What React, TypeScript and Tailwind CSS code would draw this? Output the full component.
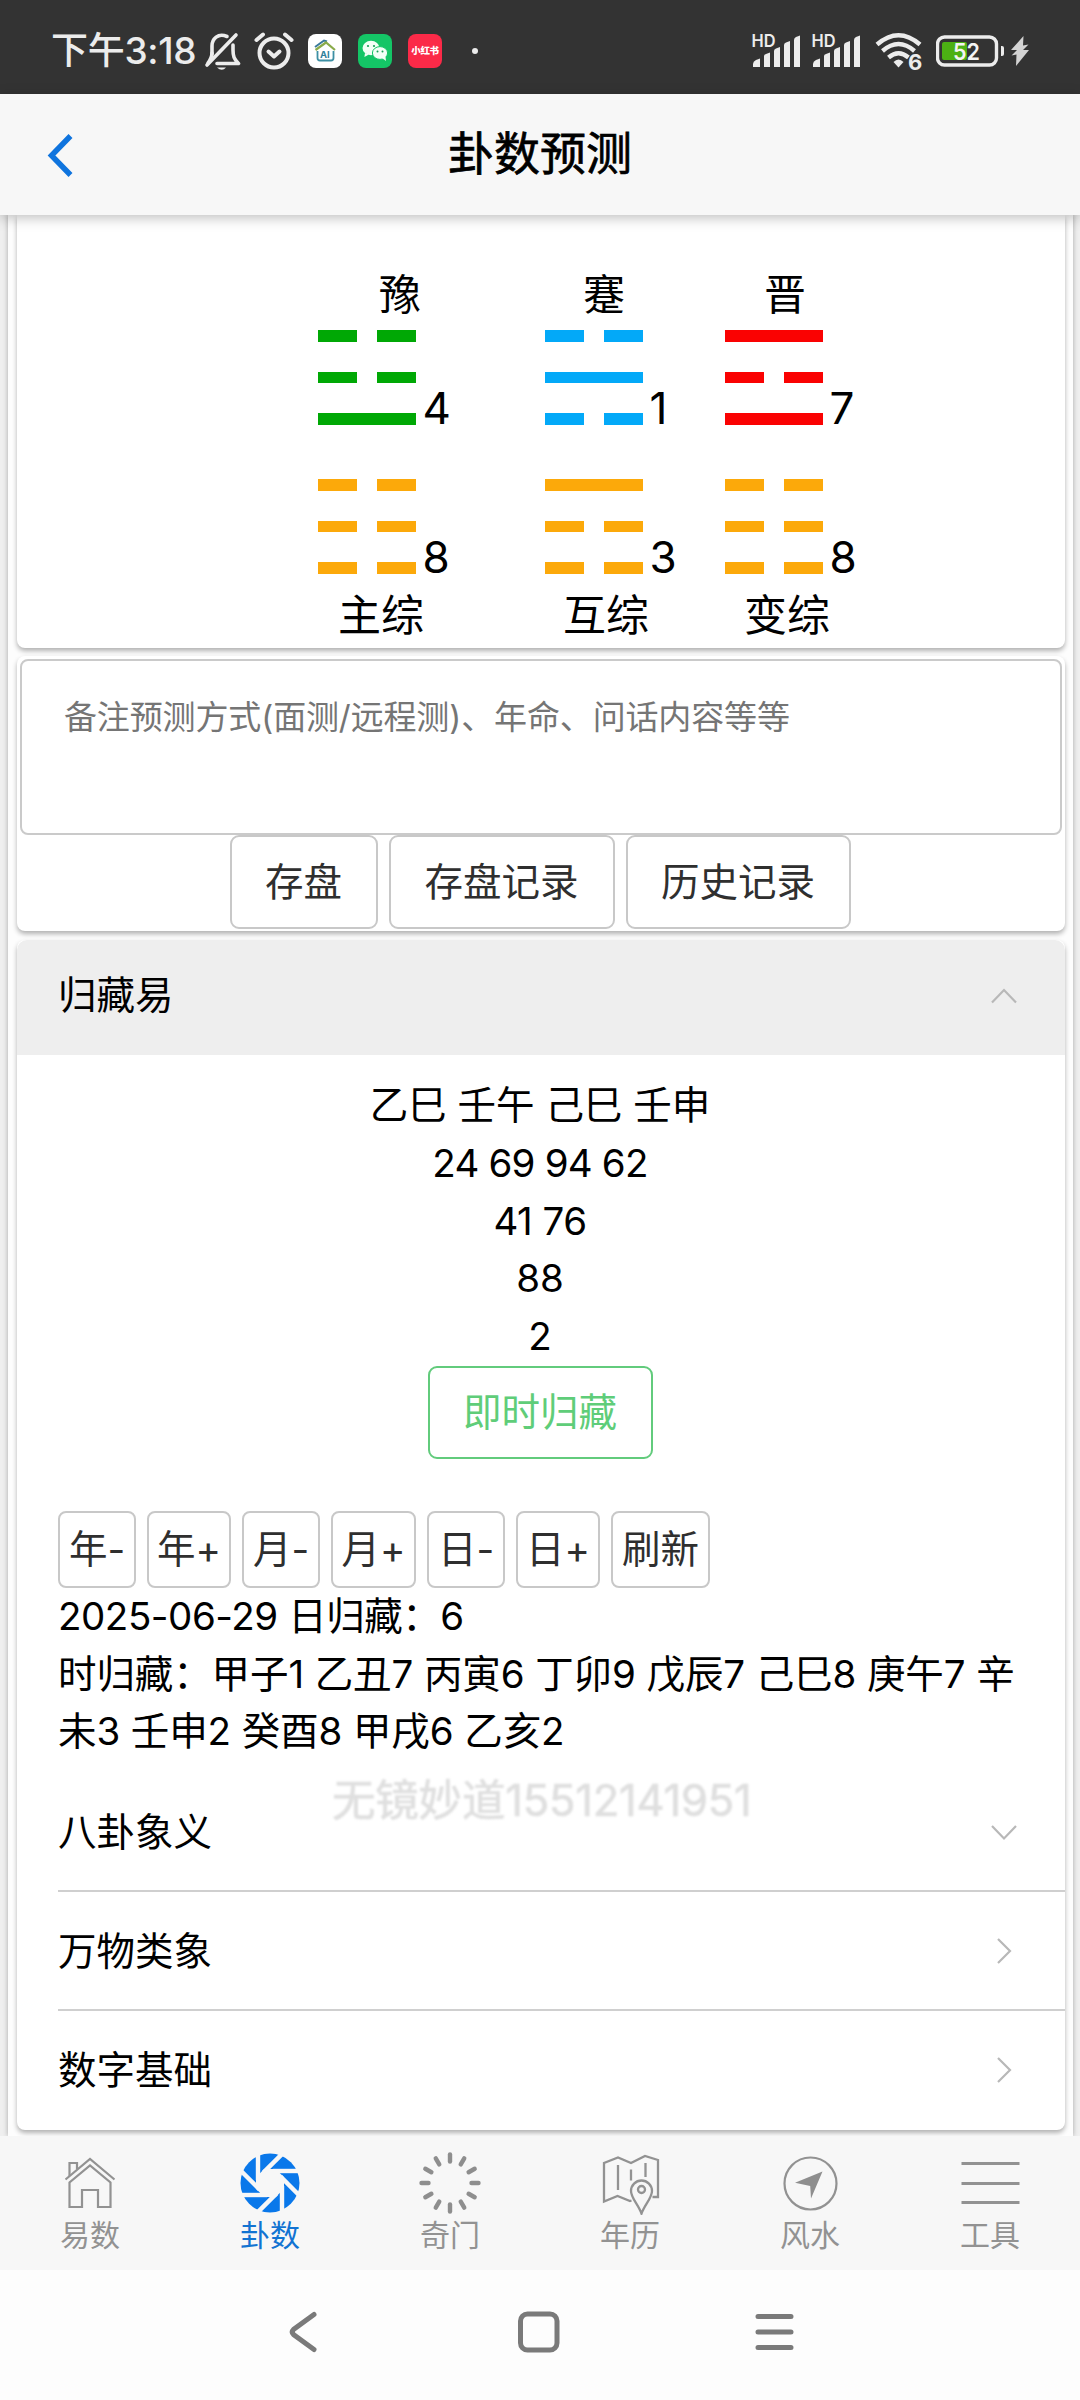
import { useState } from 'react';
import clsx from 'clsx';

type Hexagram = {
  title: string;
  label: string;
  className: string;
  titleClass: string;
  labelClass: string;
  upper: { color: string; lines: number[]; num: number };
  lower: { color: string; lines: number[]; num: number };
};

// 1 = solid line, 0 = broken line, from top to bottom
const hexagrams: Hexagram[] = [
  {
    title: '豫',
    label: '主综',
    className: 'w-[227px]',
    titleClass: 'pl-[61px]',
    labelClass: 'pl-[20px]',
    upper: { color: 'bg-[#00a805]', lines: [0, 0, 1], num: 4 },
    lower: { color: 'bg-[#fca90a]', lines: [0, 0, 0], num: 8 },
  },
  {
    title: '蹇',
    label: '互综',
    className: 'w-[180px]',
    titleClass: 'pl-[38px]',
    labelClass: 'pl-[18px]',
    upper: { color: 'bg-[#03a9f8]', lines: [0, 1, 0], num: 1 },
    lower: { color: 'bg-[#fca90a]', lines: [1, 0, 0], num: 3 },
  },
  {
    title: '晋',
    label: '变综',
    className: 'w-[180px]',
    titleClass: 'pl-[39px]',
    labelClass: 'pl-[19px]',
    upper: { color: 'bg-[#fa0202]', lines: [1, 0, 1], num: 7 },
    lower: { color: 'bg-[#fca90a]', lines: [0, 0, 0], num: 8 },
  },
];

const dateButtons = [
  { text: '年', sign: '–', width: 'w-[78px]' },
  { text: '年', sign: '+', width: 'w-[84px]' },
  { text: '月', sign: '–', width: 'w-[78px]' },
  { text: '月', sign: '+', width: 'w-[85px]' },
  { text: '日', sign: '–', width: 'w-[78px]' },
  { text: '日', sign: '+', width: 'w-[84px]' },
  { text: '刷新', sign: '', width: 'w-[99px]' },
];

const card = 'bg-white shadow-[0_3px_5px_rgba(0,0,0,0.3)]';

function Signal() {
  return (
    <svg className="w-[51px] h-[48px] shrink-0" viewBox="-1 -7 51 48" fill="#ececec">
      <text x="-0.5" y="13" fontSize="17" fontWeight="600" fontFamily="Inter" textLength="24" lengthAdjust="spacingAndGlyphs">
        HD
      </text>
      <path d="M1 33v-3q0-2.500 3-4l4-1.500V33z" />
      <path d="M12 33V22q0-1.500 2-2l4-1.500V33z" />
      <path d="M22 33V17q0-2 2-2.500l4-1.500V33z" />
      <path d="M32 33V11q0-2 2-2.500l4-1.500V33z" />
      <path d="M42 33V6q0-2 2-3l4-1.500V33z" />
    </svg>
  );
}

function StatusBar() {
  return (
    <div className="flex items-center h-[94px] pt-[8px] bg-[#333333] text-[#ececec]">
      <span className="ml-[51px] w-[152px] text-[37px] leading-[40px] font-medium whitespace-nowrap tracking-[-0.3px]">下午3:18</span>
      <svg className="w-[38px] h-[40px] shrink-0" viewBox="0 0 38 40" fill="none" stroke="#ececec" strokeWidth="3.600" strokeLinecap="round">
        <path d="M24 5.500C15 1.500 9 8 9 15v8" />
        <path d="M9 22c0 4-1 6-4 10" />
        <path d="M30 14v5c0 6 1 9 5.500 13.500H14" strokeLinejoin="round" />
        <path d="M4 34L33 4" />
        <path d="M14 36.500q5 4.500 9 0z" fill="#ececec" stroke="none" />
      </svg>
      <svg className="ml-[13px] w-[40px] h-[40px] shrink-0" viewBox="0 0 40 40" fill="none" stroke="#ececec" strokeWidth="4" strokeLinecap="round">
        <circle cx="20" cy="22" r="14.500" />
        <path d="M14.500 20.500l5.500 5 5.500-5" strokeLinejoin="round" />
        <path d="M2.500 9L9 3.500M37.500 9L31 3.500" />
      </svg>
      <svg className="ml-[14px] w-[34px] h-[34px] shrink-0" viewBox="0 0 34 34">
        <rect width="34" height="34" rx="8" fill="#fff" />
        <path d="M7 13L16 6.500l3 1" fill="none" stroke="#3a7a9c" strokeWidth="2" />
        <path d="M7.500 16L18 8.500 27 16" fill="none" stroke="#8aab4a" strokeWidth="2.200" />
        <path d="M9.500 17v7q0 2.500 2.500 2.500h11q2.500 0 2.500-2.500v-7" fill="none" stroke="#3d8fa3" strokeWidth="1.800" />
        <text x="12" y="24" fontSize="9.500" fontWeight="700" fontFamily="Inter" fill="#2e7f9b">
          AI
        </text>
      </svg>
      <svg className="ml-[16px] w-[34px] h-[34px] shrink-0" viewBox="0 0 34 34">
        <rect width="34" height="34" rx="8" fill="#14c566" />
        <ellipse cx="13" cy="14" rx="8.500" ry="7.200" fill="#f2fff6" />
        <path d="M7 19l-.6 4 4.500-2.500z" fill="#f2fff6" />
        <ellipse cx="22" cy="19" rx="7.600" ry="6.400" fill="#f2fff6" stroke="#14c566" strokeWidth="1" />
        <path d="M24 24l4 3-.6-4.500z" fill="#f2fff6" />
        <g fill="#14a055">
          <circle cx="10" cy="12" r="1.100" />
          <circle cx="16" cy="12" r="1.100" />
          <circle cx="19.500" cy="17.500" r="1" />
          <circle cx="24.500" cy="17.500" r="1" />
        </g>
      </svg>
      <div className="ml-[16px] flex items-center justify-center w-[34px] h-[34px] shrink-0 rounded-[8px] bg-[#fb2a48] text-white text-[9.5px] font-black tracking-[-0.3px] whitespace-nowrap">
        小红书
      </div>
      <div className="ml-[30px] w-[6px] h-[6px] shrink-0 rounded-full bg-[#ececec]" />
      <div className="ml-auto flex items-center">
        <Signal />
        <div className="w-[9px]" />
        <Signal />
        <svg className="ml-[13px] w-[50px] h-[56px] shrink-0" viewBox="0 -8 50 56" fill="none" stroke="#ececec" strokeWidth="4.400">
          <path d="M2 13.500Q23.500-5 45 13.500" />
          <path d="M7.500 20Q23.500 6 39.500 20" />
          <path d="M13.500 26.500Q23.500 18 33.500 26.500" />
          <path d="M18.500 31l5 5.500 5-5.500q-5-5-10 0z" fill="#ececec" stroke="none" />
          <text x="33" y="39" fontSize="22" fontWeight="700" fontFamily="Inter" fill="#ececec" stroke="#333333" strokeWidth="2" paintOrder="stroke">
            6
          </text>
        </svg>
        <svg className="ml-[11px] w-[70px] h-[32px] shrink-0" viewBox="1 0 70 32">
          <rect x="2.500" y="2" width="59" height="28" rx="7" fill="none" stroke="#ececec" strokeWidth="3.400" />
          <rect x="7" y="7" width="25" height="18" rx="2" fill="#4cb014" />
          <path d="M66 11h1q2 0 2 2v6q0 2-2 2H66z" fill="#ececec" />
          <text x="18" y="24.500" fontSize="23" fontWeight="600" fontFamily="Inter" fill="#f4f4f4" textLength="27" lengthAdjust="spacingAndGlyphs">
            52
          </text>
        </svg>
        <svg className="ml-[4px] mr-[50px] w-[20px] h-[32px] shrink-0" viewBox="0 0 20 32" fill="#d4d4d4">
          <path d="M13.500 1L1 15h6L1.500 20.500l5-1L6 31l13-16h-6l5.500-5.500-5.500 1z" />
        </svg>
      </div>
    </div>
  );
}

function NavHeader({ title }: { title: string }) {
  return (
    <div className="relative z-10 grid grid-cols-3 items-center h-[121px] px-[47px] bg-[#f7f7f7] shadow-[0_3px_12px_rgba(0,0,0,0.25)]">
      <svg className="w-[26px] h-[44px]" viewBox="0 0 26 44" fill="none" stroke="#0f74de" strokeWidth="5.500">
        <path d="M23.500 3L4.500 22.500l19 19.500" />
      </svg>
      <h1 className="pb-[3px] text-center text-[46px] leading-[56px] text-black [-webkit-text-stroke:0.7px_black]">{title}</h1>
    </div>
  );
}

function Trigram({ color, lines, num }: { color: string; lines: number[]; num: number }) {
  return (
    <div className="flex items-end">
      <div className="flex flex-col gap-[30px] w-[97.5px]">
        {lines.map((line, i) => (
          <div key={i} className="flex justify-between h-[11.5px]">
            {line ? (
              <div className={clsx('w-full', color)} />
            ) : (
              <>
                <div className={clsx('w-[38.5px]', color)} />
                <div className={clsx('w-[38.5px]', color)} />
              </>
            )}
          </div>
        ))}
      </div>
      <span className="pl-[7px] h-[33px] text-[44px] leading-[33px] tracking-[-1px]">{num}</span>
    </div>
  );
}

function HexagramColumn({ item }: { item: Hexagram }) {
  return (
    <div className={item.className}>
      <div className={clsx('h-[62px] text-[42px] leading-[53px]', item.titleClass)}>{item.title}</div>
      <Trigram {...item.upper} />
      <div className="h-[54.5px]" />
      <Trigram {...item.lower} />
      <div className={clsx('pt-[13px] text-[43px] leading-[56px] whitespace-nowrap', item.labelClass)}>{item.label}</div>
    </div>
  );
}

function Chevron({ dir }: { dir: 'up' | 'down' | 'right' }) {
  return (
    <svg className="w-[28px] h-[28px]" viewBox="0 0 28 28" fill="none" stroke="#b8b8b8" strokeWidth="2.200">
      {dir === 'up' && <path d="M2 21.500L14 9 26 21.500" />}
      {dir === 'down' && <path d="M2 8L14 20.500 26 8" />}
      {dir === 'right' && <path d="M8 2L20 14 8 26" />}
    </svg>
  );
}

function ListRow({ text, dir, last }: { text: string; dir: 'down' | 'right'; last?: boolean }) {
  return (
    <div
      className={clsx(
        'flex items-center justify-between h-[119px] ml-[41px] pr-[47px] text-[38.5px] leading-[56px]',
        last ? 'pb-[2px]' : 'border-b-2 border-[#cfcfcf]'
      )}
    >
      <span>{text}</span>
      <Chevron dir={dir} />
    </div>
  );
}

function HomeIcon() {
  return (
    <svg className="w-[64px] h-[64px]" viewBox="0 0 64 64" fill="none" stroke="#929292" strokeWidth="2.200">
      <path d="M7.500 28.500L32 8l24.500 20.500" />
      <path d="M11.500 56V31.500L32 14.500l20.500 17V56H40V39H24v17z" />
      <path d="M11.500 25V12H19v6" />
    </svg>
  );
}

function ApertureIcon() {
  return (
    <svg className="w-[64px] h-[64px]" viewBox="-32 -32 64 64">
      <circle r="29.500" fill="#0a78ea" />
      <polygon points="14,-5.800 14,5.800 5.800,14 -5.800,14 -14,5.800 -14,-5.800 -5.800,-14 5.800,-14" fill="#f7f7f7" />
      {[0, 45, 90, 135, 180, 225, 270, 315].map((a) => (
        <path key={a} d="M-12-31V-3" stroke="#f7f7f7" strokeWidth="4.400" transform={`rotate(${a})`} />
      ))}
    </svg>
  );
}

function SpinnerIcon() {
  return (
    <svg className="w-[64px] h-[64px]" viewBox="-32 -32 64 64" stroke="#8e8e8e" strokeWidth="4.400" strokeLinecap="round">
      {[0, 30, 60, 90, 120, 150, 180, 210, 240, 270, 300, 330].map((a) => (
        <path key={a} d="M0-28.500V-21.500" transform={`rotate(${a})`} />
      ))}
    </svg>
  );
}

function MapIcon() {
  return (
    <svg className="w-[64px] h-[64px]" viewBox="-1 0 64 64" fill="none" stroke="#929292" strokeWidth="2.300">
      <path d="M32.500 49.500L31 50l-12.500-5L5 50.500V12l14-5.500L32 12l14-7 13 4v37h-5.500" />
      <path d="M19 14v25M32 18.500v11M46.500 12v14" />
      <path d="M42.500 62.500C39 53 32 47 32 40a10.500 10.500 0 0 1 21 0c0 7-7 13-10.500 22.500z" />
      <circle cx="42.500" cy="38.500" r="3.500" />
    </svg>
  );
}

function CompassIcon() {
  return (
    <svg className="w-[64px] h-[64px]" viewBox="0 0 64 64">
      <circle cx="32.500" cy="32.500" r="26" fill="none" stroke="#929292" strokeWidth="2.200" />
      <path d="M17 31.700L44.500 20.500 33 47.500l-.8-12.500z" fill="#8e8e8e" />
    </svg>
  );
}

function MenuIcon() {
  return (
    <svg className="w-[64px] h-[64px]" viewBox="0 0 64 64" stroke="#929292" strokeWidth="3">
      <path d="M3.500 12.500h58M3.500 32.500h58M3.500 51.500h58" />
    </svg>
  );
}

const tabs = [
  { name: '易数', icon: <HomeIcon /> },
  { name: '卦数', icon: <ApertureIcon /> },
  { name: '奇门', icon: <SpinnerIcon /> },
  { name: '年历', icon: <MapIcon /> },
  { name: '风水', icon: <CompassIcon /> },
  { name: '工具', icon: <MenuIcon /> },
];

function TabBar({ active }: { active: string }) {
  return (
    <div className="relative grid grid-cols-6 h-[134px] bg-[#f7f7f7]">
      {tabs.map((tab) => (
        <div key={tab.name} className="flex flex-col items-center pt-[15px]">
          {tab.icon}
          <span className={clsx('pt-[2px] text-[30px] leading-[36px]', tab.name === active ? 'text-[#1273d2]' : 'text-[#929292]')}>
            {tab.name}
          </span>
        </div>
      ))}
    </div>
  );
}

function SystemNav() {
  return (
    <div className="flex items-center justify-center h-[130px] pb-[6px] bg-[#fdfdfd]">
      <div className="flex justify-center w-[235px]">
        <svg className="w-[46px] h-[46px]" viewBox="3 0 46 46" fill="none" stroke="#7a7a7a" strokeWidth="5" strokeLinecap="round">
          <path d="M35 5.500L14.500 20.500q-2.500 2.500 0 5L35 40.500" />
        </svg>
      </div>
      <div className="flex justify-center w-[235px]">
        <svg className="w-[46px] h-[46px]" viewBox="1 0 46 46" fill="none" stroke="#7a7a7a" strokeWidth="5">
          <rect x="4.500" y="5" width="36.500" height="36" rx="7" />
        </svg>
      </div>
      <div className="flex justify-center w-[235px]">
        <svg className="w-[46px] h-[46px]" viewBox="0 0 46 46" stroke="#7a7a7a" strokeWidth="5" strokeLinecap="round">
          <path d="M6 7.500h33M6 23h33M6 38.500h33" />
        </svg>
      </div>
    </div>
  );
}

export default function App() {
  const [note, setNote] = useState('');
  const mainButton = 'h-[94px] border-2 border-[#c8c8c8] rounded-[9px] text-[38.5px] leading-[56px] text-[#2f2f2f]';

  return (
    <div className="w-[1080px] h-[2400px] overflow-hidden bg-[#efefef] text-black font-['Inter','Noto_Sans_CJK_SC',sans-serif]">
      <StatusBar />
      <NavHeader title="卦数预测" />

      <div className="h-[1921px] ml-[8px] mr-[7px] pl-[9px] pr-[8px] bg-[#fdfdfd] shadow-[0_0_5px_rgba(0,0,0,0.3)]">
        <div className={clsx('flex h-[433px] pl-[301px] pt-[53px] rounded-b-[8px]', card)}>
          {hexagrams.map((item) => (
            <HexagramColumn key={item.title} item={item} />
          ))}
        </div>

        <div className={clsx('h-[275px] mt-[8px] px-[3px] pt-[3px] rounded-[8px]', card)}>
          <textarea
            className="block w-full h-[176px] px-[42px] pt-[32px] border-2 border-[#cacaca] rounded-[8px] resize-none text-[33px] leading-[48px] tracking-[-0.13px] placeholder:text-[#757575]"
            placeholder="备注预测方式(面测/远程测)、年命、问话内容等等"
            value={note}
            onChange={(e) => setNote(e.target.value)}
          />
          <div className="flex justify-center gap-[11px] pr-[2px]">
            <button className={clsx('w-[148px]', mainButton)}>存盘</button>
            <button className={clsx('w-[226px]', mainButton)}>存盘记录</button>
            <button className={clsx('w-[225px]', mainButton)}>历史记录</button>
          </div>
        </div>

        <div className={clsx('relative h-[1190px] mt-[9px] rounded-[8px]', card)}>
          <div className="flex items-center justify-between h-[115px] pl-[41px] pr-[47px] pb-[5px] rounded-t-[10px] bg-[#eeeeee] text-[38.5px] leading-[56px]">
            <span>归藏易</span>
            <Chevron dir="up" />
          </div>

          <div className="px-[41px] pt-[22px] text-[38.5px] leading-[57.75px]">
            <div className="pr-[2px] text-center">
              <p>乙巳 壬午 己巳 壬申</p>
              <p className="tracking-[-0.8px]">24 69 94 62</p>
              <p className="tracking-[-0.5px]">41 76</p>
              <p>88</p>
              <p>2</p>
              <button className="block mx-auto w-[225px] h-[93px] border-2 border-[#62cb7c] rounded-[9px] text-[#5fcd79] leading-[56px]">
                即时归藏
              </button>
            </div>
            <div className="flex gap-[11px] mt-[52px]">
              {dateButtons.map((b) => (
                <button
                  key={b.text + b.sign}
                  className={clsx(
                    'h-[77px] border-2 border-[#c8c8c8] rounded-[8px] text-[#2f2f2f] leading-[56px] whitespace-nowrap',
                    b.width
                  )}
                >
                  {b.text}
                  {b.sign === '–' ? '-' : b.sign}
                </button>
              ))}
            </div>
            <p className="tracking-[-0.45px]">2025-06-29 日归藏：6</p>
            <p className="whitespace-nowrap tracking-[-0.1px]">
              时归藏：甲子1 乙丑7 丙寅6 丁卯9 戊辰7 己巳8 庚午7 辛
              <br />
              未3 壬申2 癸酉8 甲戌6 乙亥2
            </p>
          </div>

          <div className="mt-[12px]">
            <ListRow text="八卦象义" dir="down" />
            <ListRow text="万物类象" dir="right" />
            <ListRow text="数字基础" dir="right" last />
          </div>

          <div className="absolute top-[832px] left-[315px] text-[43.5px] leading-[56px] tracking-[-0.2px] text-[#dfdfdf] whitespace-nowrap blur-[1px] [-webkit-text-stroke:0.7px_#dfdfdf]">
            无镜妙道15512141951
          </div>
        </div>
      </div>

      <TabBar active="卦数" />
      <SystemNav />
    </div>
  );
}
